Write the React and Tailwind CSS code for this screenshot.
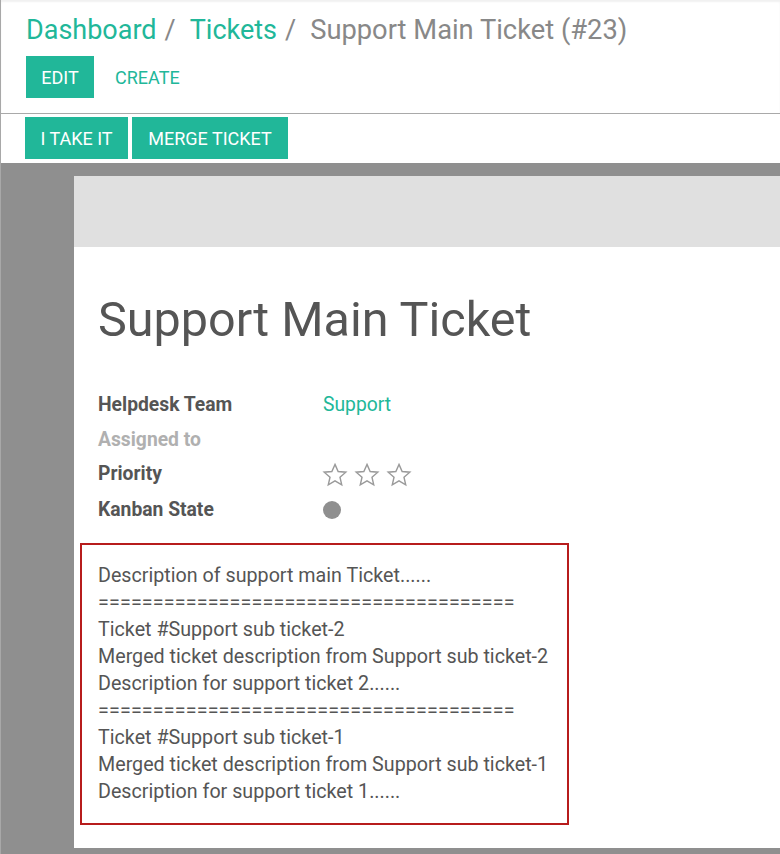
import React from "react";

function Star() {
  return (
    <svg width="26" height="26" viewBox="0 0 24 24" fill="none" stroke="#9a9a9a" strokeWidth="1.3" strokeLinejoin="miter">
      <path d="M12 2.2l2.9 6.6 7.1.6-5.4 4.7 1.6 7-6.2-3.7-6.2 3.7 1.6-7L2 9.4l7.1-.6z" />
    </svg>
  );
}

const SEPARATOR = "======================================";

const descriptionLines = [
  "Description of support main Ticket......",
  SEPARATOR,
  "Ticket #Support sub ticket-2",
  "Merged ticket description from Support sub ticket-2",
  "Description for support ticket 2......",
  SEPARATOR,
  "Ticket #Support sub ticket-1",
  "Merged ticket description from Support sub ticket-1",
  "Description for support ticket 1......",
];

function App() {
  return (
    <div
      className="w-full h-[854px] overflow-hidden bg-[#8f8f8f] border-l border-[#a8a8a8] flex flex-col"
      style={{ fontFamily: "Roboto, 'Liberation Sans', sans-serif" }}
    >
      {/* Control panel */}
      <div className="bg-white h-[114px] border-b border-[#a9a9a9] px-[25px] pt-[12px] shadow-[inset_0_2px_2px_rgba(0,0,0,0.06)]">
        <div className="text-[27px] leading-[36px] flex items-center whitespace-nowrap">
          <span className="text-[#21b799]">Dashboard</span>
          <span className="text-[#888] ml-[8px] mr-[14px]">/</span>
          <span className="text-[#21b799]">Tickets</span>
          <span className="text-[#888] ml-[8px] mr-[14px]">/</span>
          <span className="text-[#888] text-[27.3px]">Support Main Ticket (#23)</span>
        </div>
        <div className="flex items-center mt-[8px]">
          <button className="bg-[#21b799] text-white text-[18px] h-[42px] w-[68px]">EDIT</button>
          <button className="text-[#21b799] text-[18px] h-[42px] ml-[21px]">CREATE</button>
        </div>
      </div>

      {/* Status bar */}
      <div className="bg-white h-[49px] pt-[3px] px-[24px] flex items-start gap-[4px]">
        <button className="bg-[#21b799] text-white text-[18px] h-[42px] w-[103px]">I TAKE IT</button>
        <button className="bg-[#21b799] text-white text-[18px] h-[42px] w-[156px]">MERGE TICKET</button>
      </div>

      {/* Sheet */}
      <div className="flex-1 pt-[13px] pl-[73px]">
        <div className="bg-white h-[672px] flex flex-col">
          <div className="bg-[#e0e0e0] h-[71px]" />
          <div className="pl-[24px]">
            <h1 className="text-[48.5px] leading-[60px] text-[#555] mt-[43px]">Support Main Ticket</h1>
            <div className="mt-[38px] text-[19.3px]">
              <div className="flex items-center h-[35px]">
                <span className="w-[225px] font-bold text-[#555]">Helpdesk Team</span>
                <span className="text-[#21b799]">Support</span>
              </div>
              <div className="flex items-center h-[34px]">
                <span className="w-[225px] font-bold text-[#b0b0b0]">Assigned to</span>
              </div>
              <div className="flex items-center h-[35px]">
                <span className="w-[225px] font-bold text-[#555]">Priority</span>
                <span className="flex gap-[6px] -ml-[1px]">
                  <Star />
                  <Star />
                  <Star />
                </span>
              </div>
              <div className="flex items-center h-[36px]">
                <span className="w-[225px] font-bold text-[#555]">Kanban State</span>
                <span className="w-[18px] h-[18px] rounded-full bg-[#8f8f8f]" />
              </div>
            </div>
          </div>
          <div className="ml-[6px] mt-[15px] w-[489px] h-[282px] border-2 border-[#b71c1c] pl-[16px] pt-[17px] text-[19.7px] leading-[27px] text-[#555]">
            {descriptionLines.map((line, i) => (
              <div key={i} className={line === SEPARATOR ? "whitespace-nowrap tracking-[0.16px]" : "whitespace-nowrap"}>
                {line}
              </div>
            ))}
          </div>
        </div>
      </div>
    </div>
  );
}

export default App;
